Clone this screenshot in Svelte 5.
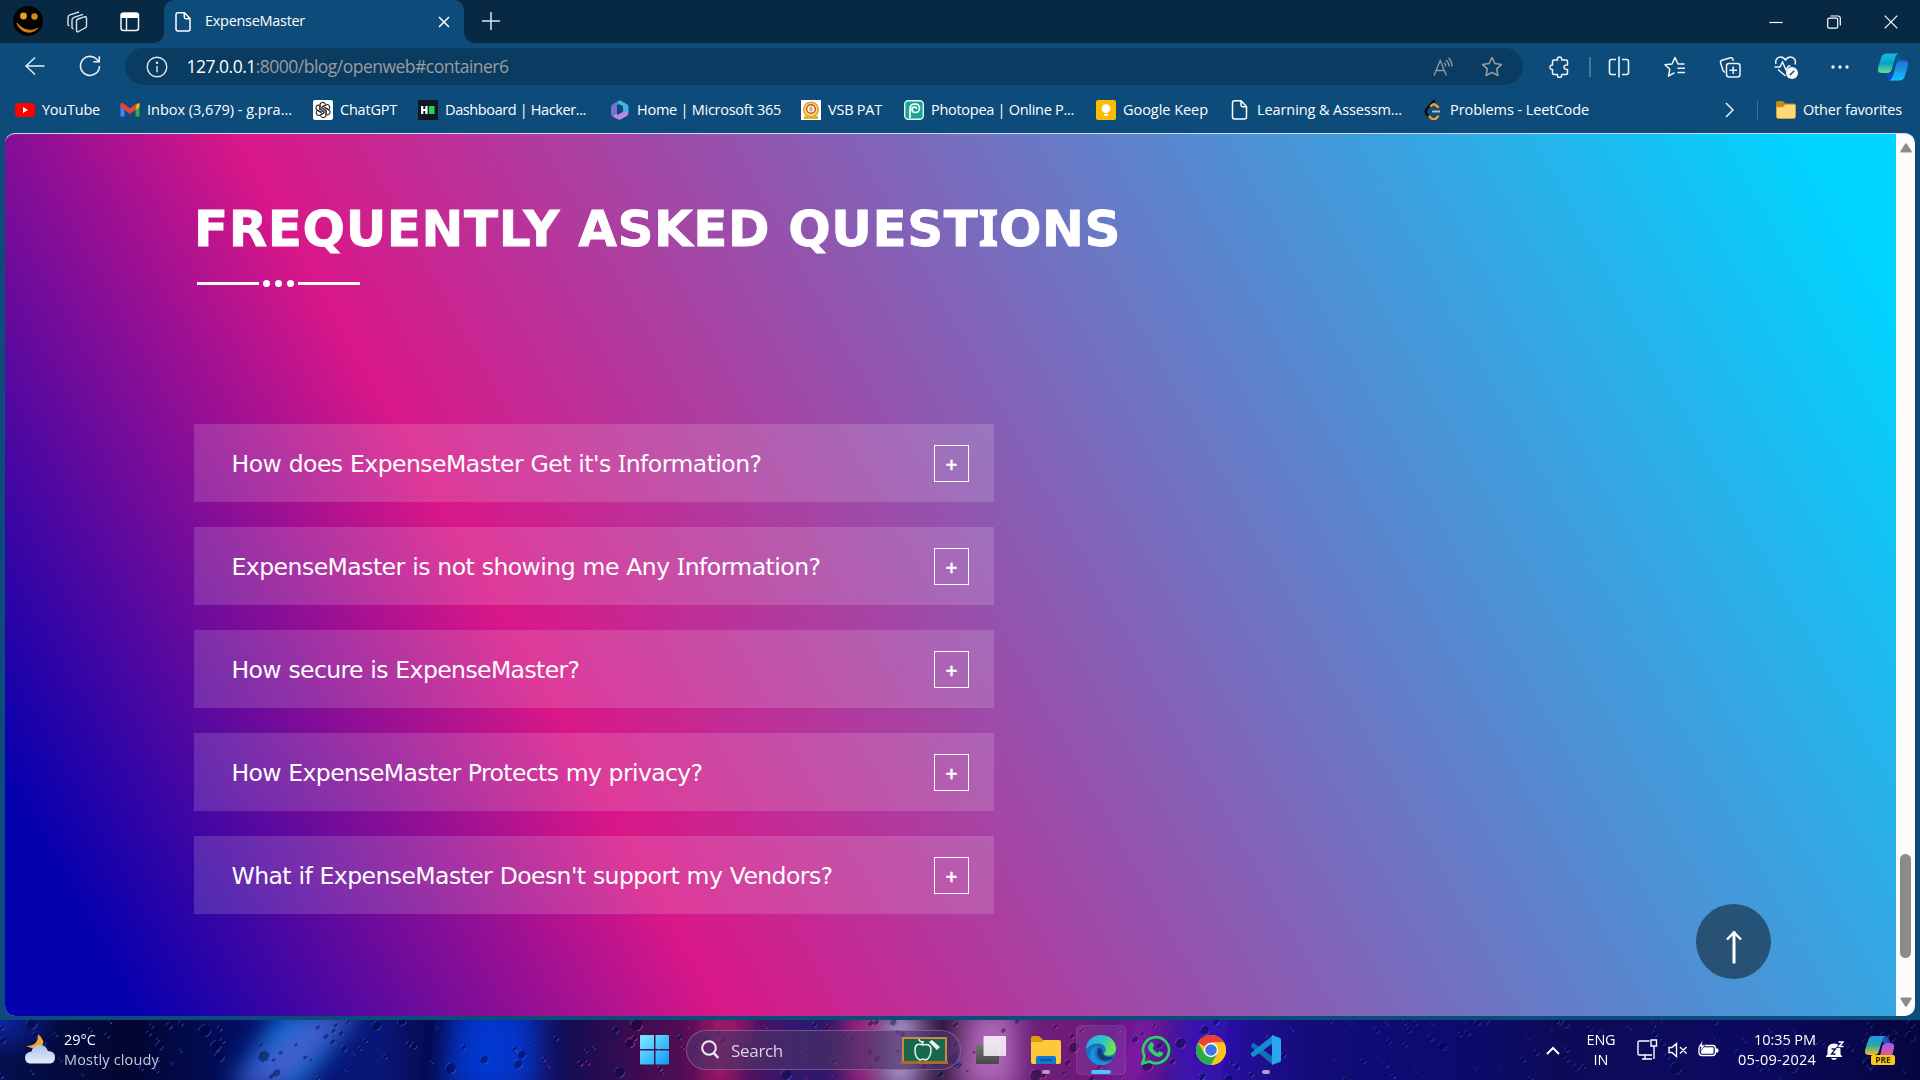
<script>
  const bookmarks = [
    { icon: 'youtube', label: 'YouTube', w: 58 },
    { icon: 'gmail', label: 'Inbox (3,679) - g.pra...', w: 145 },
    { icon: 'gpt', label: 'ChatGPT', w: 57 },
    { icon: 'hacker', label: 'Dashboard | Hacker...', w: 141 },
    { icon: 'm365', label: 'Home | Microsoft 365', w: 144 },
    { icon: 'vsb', label: 'VSB PAT', w: 54 },
    { icon: 'pea', label: 'Photopea | Online P...', w: 143 },
    { icon: 'keep', label: 'Google Keep', w: 85 },
    { icon: 'doc', label: 'Learning & Assessm...', w: 145 },
    { icon: 'leet', label: 'Problems - LeetCode', w: 139 }
  ];

  const questions = [
    { q: "How does ExpenseMaster Get it's Information?", w: 530 },
    { q: 'ExpenseMaster is not showing me Any Information?', w: 589 },
    { q: 'How secure is ExpenseMaster?', w: 348 },
    { q: 'How ExpenseMaster Protects my privacy?', w: 471 },
    { q: "What if ExpenseMaster Doesn't support my Vendors?", w: 601 }
  ];
  const heading = 'FREQUENTLY ASKED QUESTIONS';

  const pieces = (text) => text.split(/(I)/);

  // Rain drops scattered over the taskbar wallpaper
  const drops = Array.from({ length: 260 }, (_, i) => {
    const r = (n) => {
      const v = Math.sin((i + 1) * n) * 43758.5453;
      return v - Math.floor(v);
    };
    const x = r(12.9898) * 1920;
    const big = r(3.17) > 0.85;
    return {
      x,
      y: r(78.233) * 60,
      s: big ? 3.5 + r(5.3) * 3 : 1.2 + r(9.1) * 2,
      o: x > 1300 ? 0.4 : 0.6,
      c: (x > 540 && x < 1200) && r(7.7) > 0.4 ? '#d0449a' : '#3a62e8'
    };
  });

  // Tracks a line of text so that it fills the given width
  function fit(node, width) {
    const apply = () => {
      node.style.letterSpacing = '0px';
      const range = document.createRange();
      range.selectNodeContents(node);
      const natural = range.getBoundingClientRect().width;
      const n = node.textContent.length;
      node.style.letterSpacing = `${(width - natural) / n}px`;
    };
    apply();
    document.fonts?.ready.then(apply);
  }
</script>

<div class="screen">
  <header class="tabs">
    <svg class="avatar" viewBox="0 0 30 30"><circle cx="15" cy="15" r="15" fill="#050302"/><circle cx="10.500" cy="10" r="3.400" fill="#e8a020"/><circle cx="21.500" cy="10.500" r="3.200" fill="#d58a18"/><path d="M4 17c3 10 15 12 21 5-6 4-15 3-21-5z" fill="#d98a1e" stroke="#c87a18"/></svg>
    <svg class="work" viewBox="0 0 22 22" fill="none" stroke="#d8e2ea" stroke-width="1.400" stroke-linejoin="round"><path d="M10.500 10q0-1.500 1.500-2l6.500-2.200q2-.5 2 1.500V15q0 1.500-1.500 2l-6.500 3.500q-2 .8-2-1.200z"/><path d="M7.500 18 6 17V9q0-2 2-2.700L17 3.300"/><path d="M3.500 15 2 14V6.500q0-2 2-2.700L13 1"/></svg>
    <svg class="panel" viewBox="0 0 20 20"><rect x="1" y="1" width="17.500" height="17.500" rx="2.500" fill="none" stroke="#f3f6f8" stroke-width="1.500"/><path d="M1 6V3q0-2 2-2h13.500q2 0 2 2v3z" fill="#fff"/><path d="M6.500 6v12" stroke="#f3f6f8" stroke-width="1.400"/></svg>
    <div class="tab">
      <svg class="file" viewBox="0 0 16 20" fill="none" stroke="#fff" stroke-width="1.500" stroke-linejoin="round"><path d="M3 .8h6.500L15 6.500V17q0 2-2 2H3q-2 0-2-2V3Q1 .8 3 .8zM9.300 1v4q0 1.700 1.700 1.700h4"/></svg>
      <span class="tabtitle" use:fit={100}>ExpenseMaster</span>
      <svg class="tabx" viewBox="0 0 12 12" stroke="#fff" stroke-width="1.500"><path d="M1 1l10 10M11 1 1 11"/></svg>
    </div>
    <svg class="newtab" viewBox="0 0 18 18" stroke="#dfe7ec" stroke-width="1.500"><path d="M9 0v18M0 9h18"/></svg>
    <div class="winctl">
      <svg viewBox="0 0 14 14" stroke="#fff" stroke-width="1.200"><path d="M.5 7.500h13"/></svg>
      <svg viewBox="0 0 14 14" fill="none" stroke="#fff" stroke-width="1.200"><rect x=".7" y="3.200" width="10" height="10" rx="1.500"/><path d="M3.500 1h7.500q2.300 0 2.300 2.300V10.500"/></svg>
      <svg viewBox="0 0 14 14" stroke="#fff" stroke-width="1.200"><path d="M.7.7l12.600 12.600M13.300.7.7 13.300"/></svg>
    </div>
  </header>

  <div class="toolbar">
    <svg class="back" viewBox="0 0 20 20" fill="none" stroke="#e9eff3" stroke-width="1.500"><path d="M19.500 10H1M10 1.500 1 10l9 8.500"/></svg>
    <svg class="reload" viewBox="0 0 22 22" fill="none" stroke="#e9eff3" stroke-width="1.600"><path d="M20.500 11a9.500 9.500 0 1 1-3-7l2.500 2.500M20.300 1.200v5.600h-6"/></svg>
    <div class="address">
      <svg class="info" viewBox="0 0 22 22" fill="none" stroke="#dce5ea" stroke-width="1.400"><circle cx="11" cy="11" r="9.800"/><path d="M11 10v6.200"/><circle cx="11" cy="6.800" r=".6" fill="#fff"/></svg>
      <span class="url" use:fit={322}><b>127.0.0.1</b>:8000/blog/openweb#container6</span>
      <svg class="aloud" viewBox="0 0 20 20" fill="none" stroke="#8f989c" stroke-width="1.400"><path d="M1 18.500 7.200 3.500l6.200 15M3.200 13.500h8M11 5.500q1.700 1.500 1.700 4M15.500 .8q3.500 3.500 3.500 8.700M13 3q3 2.500 3 6.500"/></svg>
      <svg class="star" viewBox="0 0 22 22" fill="none" stroke="#9aa0a2" stroke-width="1.500" stroke-linejoin="round"><path d="m11 1.500 2.900 6 6.600.9-4.800 4.500 1.200 6.600-5.900-3.200-5.900 3.200 1.200-6.600L1.500 8.400l6.600-.9z"/></svg>
    </div>
    <div class="tools">
      <svg viewBox="0 0 22 22" fill="none" stroke="#f0f4f6" stroke-width="1.500" stroke-linejoin="round"><path d="M6 4h3.500q-.4-3 2-3t2.200 3H18q1.500 0 1.500 1.500V9q-3.500-.2-3.500 2.200t3.500 2.200V17q0 1.500-1.500 1.500h-4.300q.1 3-2.200 3T9.500 18.500H6Q4.500 18.500 4.500 17v-3.500Q2 13.600 2 11.200T4.500 9V5.500Q4.500 4 6 4z"/></svg>
      <i class="sep"></i>
      <svg class="split" viewBox="0 0 22 22" fill="none" stroke="#f0f4f6" stroke-width="1.600"><path d="M8 3.500H3.500q-2 0-2 2v11q0 2 2 2H8M14 3.500h4.500q2 0 2 2v11q0 2-2 2H14M11 .5v21"/></svg>
      <svg class="favs" viewBox="0 0 22 22" fill="none" stroke="#f0f4f6" stroke-width="1.500" stroke-linejoin="round"><path d="M20.500 8h-6.500L11 1.500 8 8 1 8.700l4.800 4.500-1.300 7 6-3.500M13.500 12.300H21M13.500 16.500H21"/></svg>
      <svg class="coll" viewBox="0 0 22 22" fill="none" stroke="#f0f4f6" stroke-width="1.500"><rect x="7.500" y="7.500" width="13.500" height="13.500" rx="2.500"/><path d="M14.200 10.500v7.500M10.500 14.200h7.500M14 5V3.500q-.6-2-2.500-1.700L3 4.200q-2 .6-1.400 2.600L4 14.500l2 2"/></svg>
      <svg class="heart" viewBox="0 0 24 24" fill="none" stroke="#f0f4f6" stroke-width="1.500"><path d="M2 9C.8 5 3.500 2 6.500 2q3 0 5 3 2-3 5-3c3.500 0 6 3.500 4.500 7.500M4 14.500l7.500 6.500M.5 12H6l2.500-5 3.500 8 2.500-4h2"/><circle cx="18" cy="18" r="6" fill="#fff" stroke="none"/><path d="m15.800 20.200 4.400-4.400" stroke="#0d4b7a"/></svg>
      <svg class="dots" viewBox="0 0 22 22" fill="#f0f4f6"><circle cx="4" cy="11" r="1.700"/><circle cx="11" cy="11" r="1.700"/><circle cx="18" cy="11" r="1.700"/></svg>
      <svg class="copilot" viewBox="0 0 30 28"><defs><linearGradient id="ca" x2="0" y2="1"><stop stop-color="#18b8ee"/><stop offset=".5" stop-color="#09a3c2"/><stop offset="1" stop-color="#65e08a"/></linearGradient><linearGradient id="cb" x2="0" y2="1"><stop stop-color="#1b6fdc"/><stop offset="1" stop-color="#19c0fb"/></linearGradient></defs><path d="M14 .5h5q3 0 4 4l1 3.500h-7z" fill="#075a80"/><path d="M8 20h6l2 7.500h-3q-3 0-4-4z" fill="#1247d2"/><path d="M9 .5h11q-2 1-3 4.500l-3 11q-1 4-5 4H4q-5 0-4-5L3 5Q4 .5 9 .5z" fill="url(#ca)"/><path d="M21 27.500H11q3-1 4-5l3-11q1-4 5-4h3q5 0 4 5l-3 10q-1 5-6 5z" fill="url(#cb)"/></svg>
    </div>
  </div>

  <nav class="bookmarks">
    <div class="marks">
      {#each bookmarks as b}
        <div class="mark">
          <svg viewBox="0 0 20 20">
            {#if b.icon === 'youtube'}
              <rect x="0" y="3" width="20" height="14" rx="4" fill="#f00"/><path d="m8 7 5 3-5 3z" fill="#fff"/>
            {:else if b.icon === 'gmail'}
              <path d="M.5 4v12.500h4V8z" fill="#4285f4"/><path d="M15.500 8v8.500h4V4z" fill="#34a853"/><path d="M15.500 4.500 19.500 3v4l-4 3z" fill="#fbbc04"/><path d="M.5 4.500Q.5 2 3 3l7 5.500L17 3l-1.500 7-5.500 4-5.500-4-4-3z" fill="#ea4335"/>
            {:else if b.icon === 'gpt'}
              <rect width="20" height="20" rx="2" fill="#fff"/><g fill="none" stroke="#222" stroke-width="1.100">{#each [0, 60, 120, 180, 240, 300] as a}<path transform="rotate({a} 10 10)" d="M7 9.500V5q0-2 2-2.500 2-.5 3.500 1.500M9 10V7l4-2.300"/>{/each}</g>
            {:else if b.icon === 'hacker'}
              <rect width="20" height="20" fill="#101722"/><path d="M3 6h2.300v3h2V6h2.300v8H7.300v-3h-2v3H3z" fill="#fff"/><rect x="11" y="6" width="5.500" height="8" fill="#19d65f"/>
            {:else if b.icon === 'm365'}
              <path d="M8 1 3 4Q1 5.200 1 7.500v6q0 2 2 3.300l4 2.200V5z" fill="#7a6fd6"/><path d="m8 1 2-.8 7 4q1.500 1 1.500 3V13L13 9.500V6L8.500 4 7 5z" fill="#43b6e8"/><path d="M7 13.500 13 10l5.500 2.500q0 2.500-1.800 3.500L11 19.300q-1.500.8-3 0L3 16.500z" fill="#b78be6"/><path d="M7 6l6 2v4l-6 3z" fill="#0d4b7a"/>
            {:else if b.icon === 'vsb'}
              <rect width="20" height="20" fill="#fff"/><circle cx="10" cy="9.500" r="7.300" fill="#f7dc6a" stroke="#d9a52c" stroke-width="1.500"/><circle cx="10" cy="9" r="4.300" fill="#fff" stroke="#d2503a" stroke-width="1.500"/><path d="M8.500 6.500h3v5h-3z" fill="#c9b27c"/><path d="M3 17.500h14" stroke="#e0b03a" stroke-width="3"/>
            {:else if b.icon === 'pea'}
              <rect x=".7" y=".7" width="18.600" height="18.600" rx="3.500" fill="#18a497" stroke="#e7f5f4" stroke-width="1.400"/><path d="M6 18V9q0-5 5-5 4.500 0 4.500 4.300T11 12.500q-3 0-3-3 0-2.500 2.500-2.500 2 0 2 2" fill="none" stroke="#fff" stroke-width="1.700"/>
            {:else if b.icon === 'keep'}
              <rect width="20" height="20" rx="2" fill="#fbbc04"/><circle cx="10" cy="8.500" r="4.300" fill="#fff"/><path d="M8 11h4v2H8zM8 14h4v1.800H8z" fill="#fff"/>
            {:else if b.icon === 'doc'}
              <path d="M4.500 .8H11L16.500 6.500V17q0 2-2 2h-10q-2 0-2-2V3q0-2.200 2-2.200zM11 1v4q0 1.700 1.500 1.700h4" fill="none" stroke="#fff" stroke-width="1.500"/>
            {:else}
              <path d="M11 1 4 8.500q-2.500 3 0 6L5.500 16" fill="none" stroke="#0a0a0a" stroke-width="2.400" stroke-linecap="round"/><path d="m8 6 1.500-1.300q1.500-1 3 .3L15 7M6.500 16.500l2 2q2.500 1.500 4.500 0l2-2" fill="none" stroke="#f5a021" stroke-width="2.300" stroke-linecap="round"/><path d="M9 11.500h8" stroke="#b8b8b8" stroke-width="2"/>
            {/if}
          </svg>
          <span use:fit={b.w}>{b.label}</span>
        </div>
      {/each}
    </div>
    <svg class="more" viewBox="0 0 9 16" fill="none" stroke="#eef3f6" stroke-width="1.500"><path d="m1 1 7 7-7 7"/></svg>
    <i class="fsep"></i>
    <svg class="ofold" viewBox="0 0 20 18"><path d="M0 2Q0 0 2 0h5l2 2.500H18q2 0 2 2V8H0z" fill="#c18d16"/><path d="M.4 6H7l2-2.500h9q1.600 0 1.600 2V15q0 2.500-2 2.500H2.400q-2 0-2-2.500z" fill="#ffd978" stroke="#d7a33a" stroke-width=".8"/></svg>
    <span class="other" use:fit={99}>Other favorites</span>
  </nav>

  <div class="viewport">
    <main class="page">
      <h1><span use:fit={927}>{#each pieces(heading) as p}{#if p === 'I'}<b class="cap">I</b>{:else}{p}{/if}{/each}</span></h1>
      <div class="rule"><i class="line"></i><i class="dot"></i><i class="dot"></i><i class="dot"></i><i class="line"></i></div>
      <section class="faq">
        {#each questions as item}
          <article>
            <span class="q" use:fit={item.w}>{#each pieces(item.q) as p}{#if p === 'I'}<b class="cap">I</b>{:else}{p}{/if}{/each}</span>
            <span class="plus">+</span>
          </article>
        {/each}
      </section>
      <div class="totop"><svg viewBox="0 0 16 34" fill="none" stroke="#fff"><path d="M8 1.500V33.500" stroke-width="3"/><path d="M1 9.500 8 2.500l7 7" stroke-width="2.400"/></svg></div>
    </main>
    <aside class="scroll">
      <svg viewBox="0 0 12 10" fill="#8b8b8b"><path d="M5 1q1-1.500 2 0l4.500 7q.5 1.500-1 1.500h-9Q0 9.500.5 8z"/></svg>
      <i class="thumb"></i>
      <svg viewBox="0 0 12 10" fill="#8b8b8b"><path d="M5 9q1 1.500 2 0l4.500-7q.5-1.500-1-1.500h-9Q0 .5.5 2z"/></svg>
    </aside>
  </div>

  <footer class="taskbar">
    <svg class="drops" viewBox="0 0 1920 60">
      <defs><filter id="soft" x="-20%" y="-50%" width="140%" height="200%"><feGaussianBlur stdDeviation="12"/></filter></defs>
      <g filter="url(#soft)">
        <path d="M280-10h80L300 70h-70z" fill="#1478e0" opacity=".9"/>
        <path d="M335-10h18L260 70h-22z" fill="#7a3bb8" opacity=".7"/>
        <path d="M455-10h80v80h-90z" fill="#0646f0" opacity=".6"/>
        <path d="M705-10h45l-20 80h-25z" fill="#c01870" opacity=".75"/>
        <path d="M845-10h32v80h-28z" fill="#d02a90" opacity=".8"/>
        <path d="M886-10h30v80h-30z" fill="#c9b6ec" opacity=".9"/>
        <path d="M930-10h24v80h-24z" fill="#1c0b28" opacity=".8"/>
        <path d="M968-10h48v80h-56z" fill="#bf78c8" opacity=".8"/>
        <path d="M1130-10h36l-20 80h-36z" fill="#8c1aa8" opacity=".8"/>
        <path d="M1180-10h50l-10 80h-50z" fill="#3a18c8" opacity=".6"/>
      </g>
      {#each drops as d}
        <g opacity={d.o}><ellipse cx={d.x} cy={d.y} rx={d.s} ry={d.s} fill="#02042e" opacity=".7"/><path d="M{d.x - d.s} {d.y}a{d.s} {d.s} 0 0 1 {d.s} {-d.s}" fill="none" stroke={d.c} stroke-width="1"/><path d="M{d.x + d.s} {d.y}a{d.s} {d.s} 0 0 1 {-d.s} {d.s}" fill="none" stroke={d.c} stroke-width="1.200"/></g>
      {/each}
    </svg>
    <div class="weather">
      <svg viewBox="0 0 30 30"><defs><linearGradient id="cl" x2="0" y2="1"><stop stop-color="#a9c4ef"/><stop offset="1" stop-color="#e6edf8"/></linearGradient></defs><path d="M13 0q8 7 4 12T1 12Q14 12 13 0z" fill="#f5a52c"/><path d="M6 29.500q-6 0-6-6 0-5 6.500-6 1-6 8.500-6.500 6 0 8 6 7 0 7 6.500 0 6-6 6z" fill="url(#cl)"/></svg>
      <div><span class="temp" use:fit={32}>29°C</span><span class="sky" use:fit={95}>Mostly cloudy</span></div>
    </div>
    <div class="apps">
      <svg class="start" viewBox="0 0 30 30"><defs><linearGradient id="wn" x2="1" y2="1"><stop stop-color="#7eeaff"/><stop offset="1" stop-color="#0f9bf5"/></linearGradient></defs><path d="M1 0h13v14H0V1q0-1 1-1zM15.500 0H28q1 0 1 1v13H15.500zM0 15.500h14v14H1q-1 0-1-1zM15.500 15.500H29v13q0 1-1 1H15.500z" fill="url(#wn)"/></svg>
      <div class="search">
        <svg class="lens" viewBox="0 0 18 20" fill="none" stroke="#f1edf5" stroke-width="2"><circle cx="8" cy="8" r="6.800"/><path d="m12.800 13 4.500 5" stroke-width="2.400"/></svg>
        <span use:fit={52}>Search</span>
        <svg class="board" viewBox="0 0 47 27"><rect x="1" y="0" width="45" height="25" rx="1" fill="#c88747"/><rect x="3" y="2" width="41" height="22" fill="#17684d"/><path d="M0 24h47v3H0z" fill="#ae6a2d"/><path d="M22 8q-8-3-8 5 0 8 5 10l3-1 3 1q5-3 5-10 0-7-8-5zM22 8l-1-3M23 5q-5 0-5-3" fill="none" stroke="#e6f2e9" stroke-width="1.500"/><path d="m28 5 3-2 8 7-3 3z" fill="#eee"/></svg>
      </div>
      <svg class="tview" viewBox="0 0 30 28"><defs><linearGradient id="tv" x2="0" y2="1"><stop stop-color="#777"/><stop offset="1" stop-color="#484848"/></linearGradient></defs><rect x="0" y="8" width="23" height="20" rx="1.500" fill="url(#tv)"/><rect x="7.500" y="0" width="22.500" height="20" rx="1" fill="#fff" opacity=".82"/></svg>
      <div class="app">
        <svg viewBox="0 0 30 30"><path d="M0 3q0-2 2-2h6l4 4h14v8H0z" fill="#dd9c0b"/><path d="M0 7h11l2-2h15q2 0 2 2v20q0 2-2 2H2q-2 0-2-2z" fill="#fcc93b"/><path d="M5 29v-6q0-2 2-2h16q2 0 2 2v6z" fill="#1277cf"/><path d="M9 25h12" stroke="#0b4e91" stroke-width="1.500"/></svg><i></i>
      </div>
      <div class="app active">
        <svg viewBox="0 0 30 30"><defs><linearGradient id="eg" x2="1" y2=".3"><stop stop-color="#2aa5e8"/><stop offset=".6" stop-color="#2ec4c4"/><stop offset="1" stop-color="#6fe052"/></linearGradient></defs><circle cx="15" cy="15" r="15" fill="#1572c4"/><path d="M0 14C1-5 29-4 30 13c.5 7-7 9-11 7q-2-1 0-3 2-6-4-8-8-2-15 5z" fill="url(#eg)"/><path d="M12 11q-6 6-1 13 6 6 15 1-5 6-13 5Q1 27 4 18q2-6 8-7z" fill="#1a8fdd"/><path d="M12 13q-3 8 4 12 5 2 10-1 3-2-1-2-8 1-9-5 1-4-4-4z" fill="#123f79"/></svg><i></i>
      </div>
      <div class="app">
        <svg viewBox="0 0 30 30"><path d="M1.500 28.500 3.600 21.500A13 13 0 1 1 8.500 26.500z" fill="none" stroke="#25d366" stroke-width="2.700"/><path d="M9 8q2-2 3 0l1 3-1.500 2q1.500 3.500 5 5l2-2 3 1.500q1.500 1 0 2.500-3 3.500-8 .5-6-4-6.500-8Q7 10 9 8z" fill="#25d366"/></svg>
      </div>
      <div class="app">
        <svg viewBox="0 0 30 30"><circle cx="15" cy="15" r="15" fill="#fcc31e"/><path d="M15 15 2 7.500A15 15 0 0 1 28 7.500H15z" fill="#e94235"/><path d="M2 7.500A15 15 0 0 0 15 30l6.500-11.500L15 15 8.500 18.700z" fill="#2da94f"/><path d="M15 7.500h13A15 15 0 0 1 15 30l6.500-11.300z" fill="#fcc31e"/><circle cx="15" cy="15" r="7.200" fill="#fff"/><circle cx="15" cy="15" r="5.800" fill="#3b78e7"/></svg>
      </div>
      <div class="app">
        <svg viewBox="0 0 30 30"><path d="m0 10 2.500-2.300L22 22v8L0 12z" fill="#0c6fb8"/><path d="m0 20 2.500 2.300L22 8V0L0 18z" fill="#168bd2"/><path d="m21 0 8 3q1 .5 1 2v20q0 1.500-1 2l-8 3z" fill="#2ba6ef"/></svg><i></i>
      </div>
    </div>
    <div class="tray">
      <svg class="up" viewBox="0 0 14 9" fill="none" stroke="#fff" stroke-width="2"><path d="m1 8 6-6 6 6"/></svg>
      <div class="lang"><span use:fit={29}>ENG</span><span use:fit={15}>IN</span></div>
      <svg class="net" viewBox="0 0 21 22" fill="none" stroke="#fff" stroke-width="1.400"><path d="M12.500 2H2.500Q1 2 1 3.500v11Q1 16 2.500 16H15M8 16v4M5 20h10M14 1h5.500v6H14zM17 7v13"/></svg>
      <svg class="vol" viewBox="0 0 20 16" fill="none" stroke="#fff" stroke-width="1.400"><path d="M1 5.500h3L8.500 1.500v13L4 10.500H1zM12 5l6.500 6.500M18.500 5 12 11.500"/></svg>
      <svg class="bat" viewBox="0 0 21 17"><rect x="1" y="5.500" width="16.500" height="10" rx="3" fill="none" stroke="#fff" stroke-width="1.400"/><rect x="3" y="7.300" width="12.500" height="6.500" rx="1" fill="#fff"/><path d="M18 8.500h1.500q1 0 1 2t-1 2H18z" fill="#fff"/><path d="M5 0 0 7h3l-1 5 5-7H4z" fill="#fff" stroke="#0c0a58" stroke-width=".6"/></svg>
      <div class="clock"><span use:fit={62}>10:35 PM</span><span use:fit={78}>05-09-2024</span></div>
      <svg class="bell" viewBox="0 0 18 19"><path d="M1.500 13.500V9q0-6.500 6.500-6.500T14.500 9v4.500l1.500 1.500v1H0v-1z" fill="#fff"/><path d="M5 17h6q-1 2-3 2t-3-2z" fill="#fff"/><path d="M5.500 8h4l-4 5h4" fill="none" stroke="#0c0a58" stroke-width="1.300"/><path d="M12.500 1H17l-4 4.500h4.500" fill="none" stroke="#0c0a58" stroke-width="3"/><path d="M12.500 1H17l-4 4.500h4.500" fill="none" stroke="#fff" stroke-width="1.400"/></svg>
      <div class="pre">
        <svg viewBox="0 0 30 28"><defs><linearGradient id="pa" x2="0" y2="1"><stop stop-color="#2391ee"/><stop offset=".5" stop-color="#29a9a5"/><stop offset="1" stop-color="#f4c321"/></linearGradient><linearGradient id="pb" x2="0" y2="1"><stop stop-color="#a456e8"/><stop offset="1" stop-color="#f2646f"/></linearGradient></defs><path d="M14 0h6q3 0 4 4l1 3h-7z" fill="#1c55b8"/><path d="M9 0h11q-2 1-3 5l-3 10q-1 4-5 4H4q-5 0-4-5L3 5Q4 0 9 0z" fill="url(#pa)"/><path d="M21 25H11q3-1 4-5l2-9q1-4 5-4h3q5 0 4 5l-2 8z" fill="url(#pb)"/></svg>
        <b>PRE</b>
      </div>
    </div>
  </footer>
</div>

<style>
  :global(body) { margin: 0; overflow: hidden; background: #0d4b7a; }
  .screen {
    width: 1920px; height: 1080px; overflow: hidden; display: flex; flex-direction: column;
    background: #0d4b7a; color: #fff; font-family: "Open Sans", "Noto Sans", sans-serif; font-size: 14.5px;
  }
  .screen * { box-sizing: border-box; }
  svg { display: block; flex: none; }
  span { white-space: nowrap; }

  .tabs { height: 43px; flex: none; background: #082943; display: flex; align-items: center; }
  .avatar { width: 30px; height: 30px; margin-left: 13px; margin-top: -2px; }
  .work { width: 22px; height: 22px; margin-left: 23px; }
  .panel { width: 20px; height: 20px; margin-left: 32px; }
  .tab {
    width: 300px; height: 43px; margin-left: 24px; background: #0d4b7a; border-radius: 10px 10px 0 0;
    display: flex; align-items: center; position: relative;
  }
  .tab::before, .tab::after { content: ""; position: absolute; bottom: 0; width: 10px; height: 10px; }
  .tab::before { left: -10px; background: radial-gradient(circle at 0 0, transparent 9.5px, #0d4b7a 10px); }
  .tab::after { right: -10px; background: radial-gradient(circle at 100% 0, transparent 9.5px, #0d4b7a 10px); }
  .file { width: 16px; height: 20px; margin-left: 11px; }
  .tabtitle { margin-left: 14px; width: 100px; margin-top: -2px; }
  .tabx { width: 12px; height: 12px; margin-left: auto; margin-right: 14px; }
  .newtab { width: 18px; height: 18px; margin-left: 18px; margin-top: -2px; }
  .winctl { margin-left: auto; margin-right: 22px; display: flex; gap: 43.5px; }
  .winctl svg { width: 14px; height: 14px; }

  .toolbar { height: 47px; flex: none; display: flex; align-items: center; }
  .back { width: 20px; height: 20px; margin-left: 25px; margin-top: -1px; }
  .reload { width: 22px; height: 22px; margin-left: 34px; margin-top: -1px; }
  .address {
    width: 1398px; height: 37px; margin-left: 24px; border-radius: 19px; background: #0a3b60;
    display: flex; align-items: center;
  }
  .info { width: 22px; height: 22px; margin-left: 21px; }
  .url { margin-left: 18.5px; font-size: 17.5px; color: #9a9d9f; margin-top: -1px; }
  .url b { font-weight: 400; color: #fff; }
  .aloud { width: 20px; height: 20px; margin-left: auto; }
  .star { width: 22px; height: 22px; margin: 0 20px 0 28px; }
  .tools { display: flex; align-items: center; margin-left: 25px; width: 360px; }
  .tools svg { width: 22px; height: 22px; }
  .sep { width: 2px; height: 20px; background: #4a7699; margin-left: 19px; }
  .tools .split { margin-left: 17px; }
  .tools .favs { margin-left: 34px; }
  .tools .coll { margin-left: 33px; }
  .tools .heart { width: 24px; height: 24px; margin-left: 33px; }
  .tools .dots { margin-left: 31px; }
  .tools .copilot { width: 30px; height: 28px; margin-left: 27px; }

  .bookmarks { height: 43px; flex: none; display: flex; align-items: center; padding-left: 15px; padding-bottom: 3px; }
  .marks { display: grid; grid-template-columns: 105px 193px 105px 192px 191px 103px 192px 134px 193px 170px; }
  .mark { display: flex; align-items: center; gap: 7px; }
  .mark svg { width: 20px; height: 20px; }
  .mark span, .other { margin-top: -1px; }
  .more { width: 9px; height: 16px; margin-left: 132px; }
  .fsep { width: 1px; height: 20px; background: #3c6d95; margin-left: 23px; }
  .ofold { width: 20px; height: 18px; margin-left: 18px; }
  .other { margin-left: 7px; }

  .viewport {
    height: 883px; margin: 0 5px 4px; flex: none; border-radius: 10px; overflow: hidden; display: flex;
    border-top: 1px solid #cfd9ea; background: #fcfcfc;
  }
  .page {
    width: 1891px; height: 882px; padding: 0 189px; position: relative;
    background: linear-gradient(61deg, #0500ae 5.5%, #d91788 30.2%, #00d4ff 96%);
    font-family: Verdana, "DejaVu Sans", sans-serif;
  }
  h1 { margin: 66px 0 0; height: 58px; font-size: 50px; line-height: 58px; font-weight: 700; -webkit-text-stroke: .8px #fff; }
  .cap { font-family: "Noto Sans", sans-serif; font-size: 1.02em; font-weight: inherit; line-height: 1; }
  .rule { margin: 22px 0 0 3px; height: 7px; display: flex; align-items: center; }
  .line { width: 62px; height: 3px; background: #fff; margin-right: 4px; }
  .dot { width: 7px; height: 7px; border-radius: 50%; background: #fff; margin-right: 5px; }
  .dot:nth-child(4) { margin-right: 4px; }
  .faq { margin-top: 137px; display: grid; gap: 25px; width: 800px; }
  article {
    height: 78px; background: rgba(255, 255, 255, .15); display: flex; align-items: center;
    justify-content: space-between; padding: 0 25px 0 37.5px;
  }
  .q { font-size: 23.5px; line-height: 30px; word-spacing: .5px; padding-top: 2px; }
  .plus {
    width: 35px; height: 37px; border: 1px solid #fff; display: flex; align-items: center; justify-content: center;
    font-size: 16px; font-weight: 700; padding-top: 3px; -webkit-text-stroke: .3px #fff;
  }
  .totop {
    position: absolute; left: 1691px; top: 770px; width: 75px; height: 75px; border-radius: 50%;
    background: rgba(0, 0, 0, .45); display: flex; justify-content: center; padding-top: 26px;
  }
  .totop svg { width: 16px; height: 34px; }
  .scroll { width: 19px; display: flex; flex-direction: column; align-items: center; padding: 9px 0 9px; }
  .scroll svg { width: 12px; height: 10px; }
  .thumb { width: 11px; height: 104px; border-radius: 6px; background: #8b8b8b; margin: 701px 0 auto; }

  .taskbar {
    height: 60px; flex: none; position: relative; display: flex; align-items: center;
    background:
      radial-gradient(ellipse 60px 40px at 0 0, rgba(20, 50, 220, .6), transparent),
      linear-gradient(90deg, #04104e 0, #02052f 130px, #04106c 260px, #0a1678 380px, #060b52 430px, #0626a8 490px, #150b54 570px, #3f0c50 640px, #611058 720px, #2f1770 800px, #3b1648 930px, #6a2577 1000px, #701878 1080px, #4a1388 1160px, #26109c 1230px, #120c78 1310px, #0b0b70 1450px, #0d0b58 1560px, #0b0a60 1750px, #06063f 1920px);
  }
  .drops { position: absolute; left: 0; top: 0; width: 1920px; height: 60px; }
  .weather { display: flex; align-items: center; gap: 9px; padding-left: 25px; width: 640px; position: relative; }
  .weather svg { width: 30px; height: 30px; margin-top: -2px; }
  .weather div { display: flex; flex-direction: column; line-height: 20px; }
  .sky { color: #c6c9dc; }
  .apps { display: flex; align-items: center; position: relative; }
  .start { width: 30px; height: 30px; }
  .search {
    width: 275px; height: 40px; margin-left: 16px; border-radius: 20px; background: rgba(75, 50, 105, .65);
    border: 1px solid rgba(190, 150, 200, .4); display: flex; align-items: center; padding: 0 12px 0 14px;
  }
  .lens { width: 18px; height: 20px; }
  .search span { font-size: 17px; color: #dcd2e2; margin-left: 12px; }
  .board { width: 47px; height: 27px; margin-left: auto; }
  .tview { width: 30px; height: 28px; margin: 0 15px; }
  .app { width: 50px; height: 50px; margin-right: 5px; position: relative; display: flex; flex-direction: column; align-items: center; padding-top: 10px; border-radius: 5px; }
  .app svg { width: 30px; height: 30px; }
  .app i { width: 8px; height: 4px; border-radius: 2px; background: #aaa1c8; margin-top: 5px; }
  .active { background: rgba(170, 130, 210, .18); border: 1px solid rgba(180, 140, 210, .15); padding-top: 9px; }
  .active i { width: 20px; background: #4cc2ff; }
  .tray { margin-left: auto; padding-right: 25px; display: flex; align-items: center; position: relative; }
  .up { width: 14px; height: 9px; margin-right: 26px; }
  .lang, .clock { display: flex; flex-direction: column; line-height: 20px; }
  .lang { align-items: center; width: 30px; margin-right: 21px; }
  .net { width: 21px; height: 22px; margin-right: 10px; }
  .vol { width: 20px; height: 16px; margin-right: 10px; }
  .bat { width: 21px; height: 17px; margin-right: 19px; margin-top: -4px; }
  .clock { align-items: flex-end; width: 78px; margin-right: 10px; }
  .bell { width: 18px; height: 19px; margin-right: 21px; }
  .pre { width: 30px; height: 28px; position: relative; }
  .pre svg { width: 30px; height: 28px; }
  .pre b {
    position: absolute; left: 6px; top: 19px; width: 24px; height: 10px; border-radius: 2px; background: #f8c916;
    color: #33290a; font-size: 8.5px; line-height: 10px; text-align: center;
  }
</style>
